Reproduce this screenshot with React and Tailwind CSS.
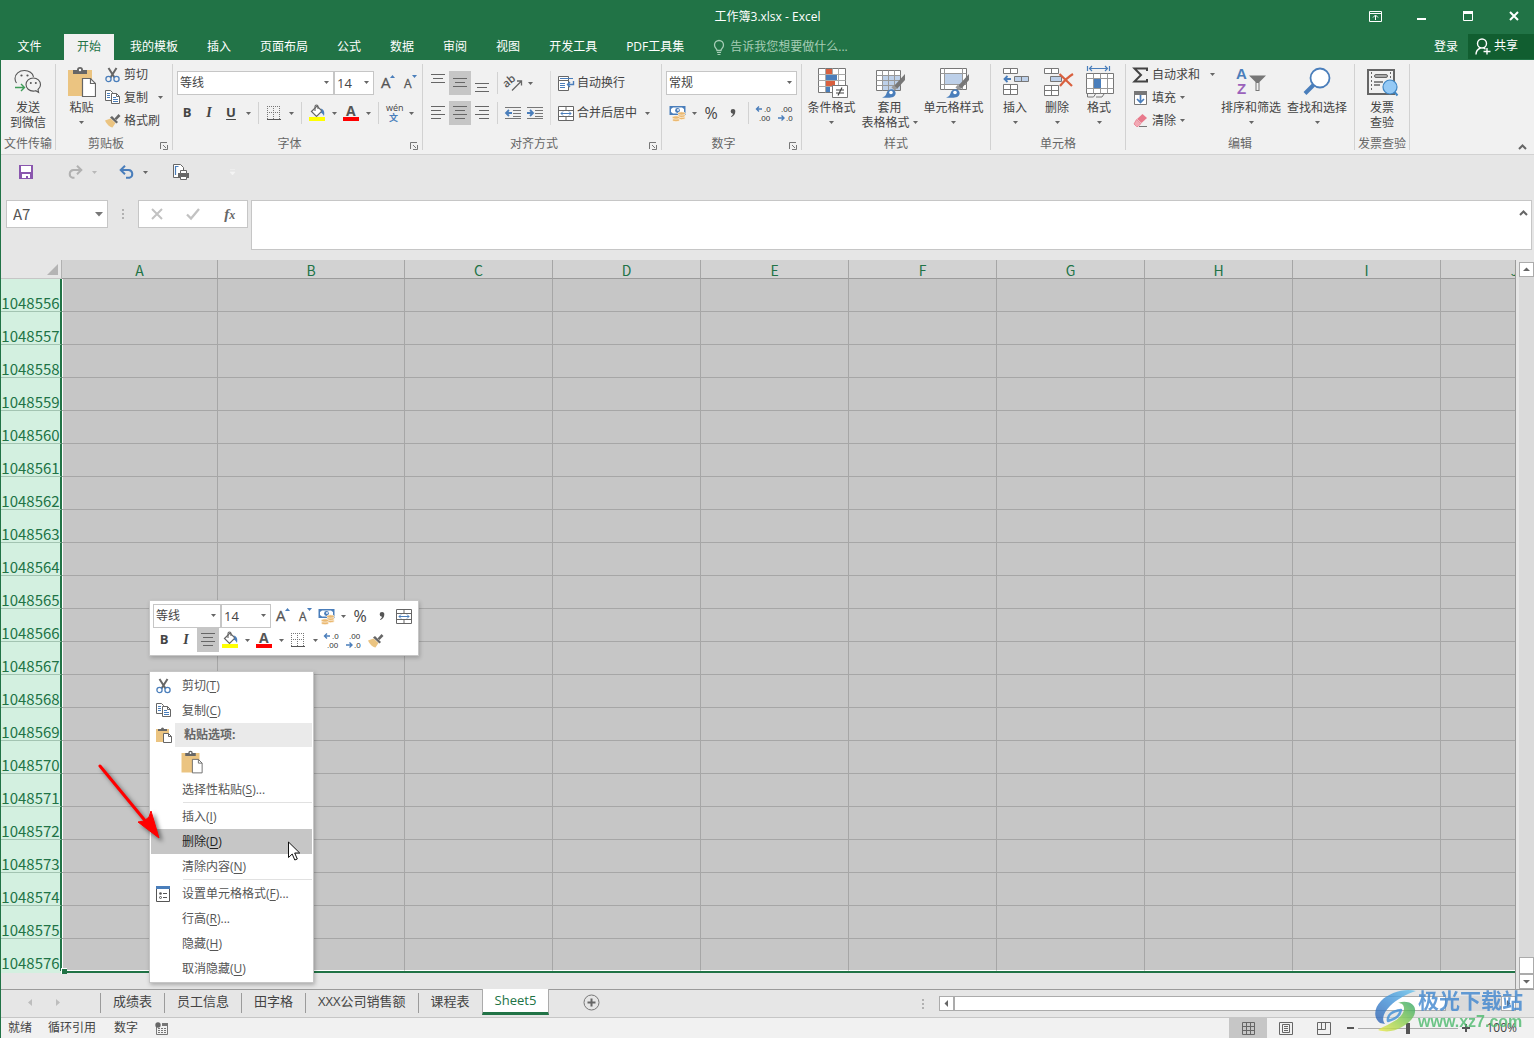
import { useState } from 'react';
import clsx from 'clsx';

const TABS = ['我的模板', '插入', '页面布局', '公式', '数据', '审阅', '视图', '开发工具', 'PDF工具集'];
const COLUMNS = ['A', 'B', 'C', 'D', 'E', 'F', 'G', 'H', 'I', 'J'];
const ROWS = Array.from({ length: 21 }, (_, i) => 1048556 + i);
const SHEETS = ['成绩表', '员工信息', '田字格', 'XXX公司销售额', '课程表'];

/* ---------- icons ---------- */

function Svg({ w = 16, h = 16, className, children, ...rest }) {
  return (
    <svg
      width={w}
      height={h}
      viewBox={`0 0 ${w} ${h}`}
      fill="none"
      className={clsx('shrink-0 overflow-visible', className)}
      aria-hidden="true"
      {...rest}
    >
      {children}
    </svg>
  );
}

function Caret({ className = 'text-[#666]' }) {
  return (
    <Svg w={5} h={3} className={className}>
      <path d="M0 0h5L2.500 3z" fill="currentColor" />
    </Svg>
  );
}

function Chevron() {
  return (
    <Svg w={9} h={6}>
      <path d="M1 5l3.500-3.500L8 5" stroke="#666" strokeWidth="2" />
    </Svg>
  );
}

function WechatIcon() {
  return (
    <Svg w={28} h={32}>
      <g stroke="#555" strokeWidth="1.100">
        <path d="M2.500 17c-1-1.500-1.500-2.500-1.500-4.500C1 8 5 4.500 10.500 4.500c4.500 0 8.300 2.600 9 6.300" />
        <path d="M24 23.500c1.500-1.300 2.500-3 2.500-4.800 0-3.900-3.200-6.700-7.200-6.700S12 14.900 12 18.600s3.300 6.500 7.300 6.500c.9 0 1.700-.1 2.500-.4l2.800 1.700z" />
      </g>
      <g fill="#555">
        <circle cx="7.500" cy="9.500" r="1.100" />
        <circle cx="13.500" cy="9.500" r="1.100" />
        <circle cx="16.800" cy="17" r="1" />
        <circle cx="21.800" cy="17" r="1" />
      </g>
      <path d="M1 21.500h9M7 18l3.500 3.500L7 25" stroke="#3f9c58" strokeWidth="1.400" />
    </Svg>
  );
}

function PasteIcon({ small }) {
  return (
    <svg
      width={small ? 22 : 28}
      height={small ? 24 : 32}
      viewBox="0 0 28 32"
      fill="none"
      className="shrink-0"
      aria-hidden="true"
    >
      <path d="M0 4h24v26H0z" fill="#ebc481" />
      <path d="M5 8V4h4a3 3 0 0 1 6 0h4v4z" fill="#666" />
      <circle cx="12" cy="4" r="1.200" fill="#fff" />
      <path d="M14.500 12.500h8l5 5v13h-13z" fill="#fff" stroke="#666" strokeWidth="1.200" />
      <path d="M22.500 12.500v5h5" stroke="#666" strokeWidth="1.200" />
    </svg>
  );
}

function PasteSmallIcon() {
  return (
    <Svg>
      <path d="M0 2h13v13H0z" fill="#ebc481" />
      <path d="M2 4V2h3a1.500 1.500 0 0 1 3 0h3v2z" fill="#666" />
      <path d="M7.500 6.500h5l3 3v6h-8z" fill="#fff" stroke="#666" />
      <path d="M12.500 6.500v3h3" stroke="#666" />
    </Svg>
  );
}

function CutIcon() {
  return (
    <Svg w={15} h={16}>
      <path d="M3.500 1L9.500 10.500M11.500 1L5.500 10.500" stroke="#666" strokeWidth="2" />
      <circle cx="3.500" cy="12" r="2.600" stroke="#4a7ebb" strokeWidth="1.300" />
      <circle cx="11.500" cy="12" r="2.600" stroke="#4a7ebb" strokeWidth="1.300" />
    </Svg>
  );
}

function CopyIcon() {
  return (
    <Svg w={15} h={15}>
      <path d="M.5.500h5l2 2v8h-7z" fill="#fff" stroke="#666" />
      <path d="M2 3.500h3M2 5.500h3M2 7.500h3" stroke="#4a7ebb" />
      <path d="M6.500 3.500h5l3 3v7h-8z" fill="#fff" stroke="#666" />
      <path d="M11.500 3.500v3h3" stroke="#666" />
      <path d="M8 7.500h3M8 9.500h5M8 11.500h5" stroke="#4a7ebb" />
    </Svg>
  );
}

function BrushIcon() {
  return (
    <Svg w={16} h={15}>
      <path d="M0 7.500l5.500-2 5 4.500-3 4.500c-3-.5-6-3.500-7.500-7z" fill="#ebc481" />
      <path d="M5 4.500l2-1.500 6 6-1.500 1.500z" fill="#666" />
      <path d="M9.500 5.500l4-4.500 2 2-4 4z" fill="#666" />
    </Svg>
  );
}

function GrowFont({ down }) {
  return (
    <Svg w={16} h={18}>
      <text
        x={down ? 3 : 2}
        y="14"
        fontSize={down ? 12 : 15}
        fill="#555"
        stroke="#555"
        strokeWidth=".3"
        fontFamily="'Open Sans', sans-serif"
      >
        A
      </text>
      <path d={down ? 'M11 1h5l-2.500 3z' : 'M11 4h5l-2.500-3z'} fill="#4a7ebb" />
    </Svg>
  );
}

function BorderIcon() {
  return (
    <Svg w={14} h={14} shapeRendering="crispEdges">
      <path
        d="M0 .5h14M0 6.500h14M.5 0v13M6.500 0v13M12.500 0v13"
        stroke="#777"
        strokeDasharray="1 1"
      />
      <path d="M0 13h14" stroke="#555" strokeWidth="1" />
    </Svg>
  );
}

function FillIcon() {
  return (
    <Svg w={16} h={18}>
      <path d="M2.500 7.500L8 2l5 5-5.500 5.500z" fill="#fff" stroke="#666" strokeWidth="1.200" />
      <path d="M6 7V2.500a1.500 1.500 0 0 1 3 0V5" stroke="#666" strokeWidth="1.100" />
      <path d="M11.500 4.500c3 .5 4.500 3 3.500 7.500-1-2-2-3-3.500-3.500L13 7z" fill="#4a7ebb" />
      <path d="M0 13h16v4H0z" fill="#ff0" />
    </Svg>
  );
}

function FontColorIcon() {
  return (
    <Svg w={16} h={18}>
      <text x="3" y="12" fontSize="14" fontWeight="700" fill="#555" fontFamily="'Open Sans', sans-serif">
        A
      </text>
      <path d="M0 13h16v4H0z" fill="#f00" />
    </Svg>
  );
}

function PinyinIcon() {
  return (
    <Svg w={18} h={18}>
      <text x="1" y="7" fontSize="9" fill="#444" fontFamily="'Open Sans', sans-serif">
        wén
      </text>
      <text x="4" y="17" fontSize="9" fontWeight="700" fill="#4a7ebb" fontFamily="'Noto Sans CJK SC', sans-serif">
        文
      </text>
    </Svg>
  );
}

const LINE_SETS = {
  top: 'M0 .5h14M2 4.500h10M0 8.500h14',
  middle: 'M0 4.500h14M2 8.500h10M0 12.500h14',
  bottom: 'M0 9.500h14M2 13.500h10M0 17.500h14',
  left: 'M0 2.500h14M0 6.500h10M0 10.500h14M0 14.500h10',
  center: 'M0 2.500h14M2 6.500h10M0 10.500h14M2 14.500h10',
  right: 'M0 2.500h14M4 6.500h10M0 10.500h14M4 14.500h10',
};

function LinesIcon({ kind }) {
  return (
    <Svg w={14} h={18}>
      <path d={LINE_SETS[kind]} stroke="#666" />
    </Svg>
  );
}

function OrientationIcon() {
  return (
    <Svg w={17} h={17}>
      <text
        x="0"
        y="10"
        fontSize="11"
        fontWeight="600"
        fill="#555"
        fontFamily="'Open Sans', sans-serif"
        transform="rotate(-40 5 10)"
      >
        ab
      </text>
      <path d="M7 15.500l9-9M12 6h4.500v4.500" stroke="#666" strokeWidth="1.300" />
    </Svg>
  );
}

function IndentIcon({ out }) {
  return (
    <Svg w={16} h={14}>
      <path d="M0 1.500h16M8 4.500h8M8 7.500h8M8 10.500h8M0 12.500h16" stroke="#777" />
      <path
        d={out ? 'M7 7H2M4 4L1 7l3 3' : 'M0 7h5M3 4l3 3-3 3'}
        stroke="#4a7ebb"
        strokeWidth="1.800"
      />
    </Svg>
  );
}

function WrapIcon() {
  return (
    <Svg w={17} h={17}>
      <path d="M.5 1.500h10v4H.5zM.5 5.500h10v10H.5z" fill="#fff" stroke="#666" />
      <path d="M2 3.500h13M2 8.500h5M2 10.500h5M2 12.500h5" stroke="#4a7ebb" />
      <path d="M15.500 6v3.500H9.500M12 7L9.500 9.500 12 12" stroke="#4a7ebb" strokeWidth="1.400" />
    </Svg>
  );
}

function MergeIcon() {
  return (
    <Svg w={16} h={15}>
      <path d="M.5.500h15v14H.5zM.5 4.500h15M.5 10.500h15M8 .5v4M8 10.500v4" fill="#fff" stroke="#666" />
      <path d="M3 7.500h10M5 5.500l-2 2 2 2M11 5.500l2 2-2 2" stroke="#4a7ebb" />
    </Svg>
  );
}

function CurrencyIcon() {
  return (
    <Svg w={17} h={17}>
      <path d="M.5 1h16v9H.5z" fill="#4a7ebb" />
      <path d="M2 4l2-1.500h9L15 4v3l-2 1.500H4L2 7z" fill="#fff" />
      <circle cx="8.500" cy="5.500" r="2.400" fill="#4a7ebb" />
      <circle cx="9" cy="5" r=".9" fill="#fff" />
      <g fill="#ebb971" stroke="#fff" strokeWidth=".6">
        <ellipse cx="12.500" cy="13" rx="3.800" ry="1.700" />
        <ellipse cx="12.500" cy="10.800" rx="3.800" ry="1.700" />
        <ellipse cx="12.500" cy="8.500" rx="3.800" ry="1.700" />
        <ellipse cx="7" cy="15" rx="3.800" ry="1.700" />
        <ellipse cx="7" cy="12.500" rx="3.800" ry="1.700" />
      </g>
    </Svg>
  );
}

function DecimalIcon({ less }) {
  return (
    <Svg w={16} h={17}>
      <g fontSize="8" fill="#333" fontFamily="'Liberation Sans', sans-serif">
        <text x={less ? 3 : 8} y="7">{less ? '.00' : '.0'}</text>
        <text x={less ? 8 : 3} y="16">{less ? '.0' : '.00'}</text>
      </g>
      <path
        d={less ? 'M0 13h5.500M3.500 10.500L6 13l-2.500 2.500' : 'M6 4H1M3 1.500L.5 4 3 6.500'}
        stroke="#4a7ebb"
        strokeWidth="1.400"
      />
    </Svg>
  );
}

function ConditionalIcon() {
  return (
    <Svg w={32} h={32}>
      <path d="M2.500 2.500h27v24h-27z" fill="#fff" stroke="#777" />
      <path d="M2.500 8.500h27M2.500 14.500h27M2.500 20.500h27M9.500 2.500v24M16.500 2.500v24M22.500 2.500v24" stroke="#aaa" />
      <path d="M10 3h6v5h-6zM10 15h9v5h-9z" fill="#d9603f" />
      <path d="M10 9h11v5H10zM10 21h4v5h-4z" fill="#4a7ebb" />
      <path d="M16.500 19.500h15v12h-15z" fill="#fff" stroke="#777" />
      <path d="M20 24h8M20 27h8M26 21.500l-4 8" stroke="#444" strokeWidth="1.200" />
    </Svg>
  );
}

function StyleBrush() {
  return (
    <>
      <path d="M31 8v6l-8 9-3-3z" fill="#777" />
      <path d="M19.500 19l3.500 3-2 2.500-3.500-3z" fill="#999" />
      <path d="M8 31.500c4-1 4-3 5-5.500 1.500-3 5.500-3.500 7.500-1.500 2.300 2.500 1 6-2.500 6.800-3 .7-6.500.7-10 .2z" fill="#4a7ebb" />
      <circle cx="17" cy="26.500" r="1.800" fill="#fff" />
    </>
  );
}

function TableStyleIcon() {
  return (
    <Svg w={32} h={32}>
      <path d="M2.500 4.500h24v20h-24z" fill="#fff" stroke="#777" />
      <path d="M9 10h17v14H9z" fill="#bdd0e9" />
      <path d="M2.500 9.500h24M2.500 14.500h24M2.500 19.500h24M8.500 4.500v20M14.500 4.500v20M20.500 4.500v20" stroke="#999" />
      <StyleBrush />
    </Svg>
  );
}

function CellStyleIcon() {
  return (
    <Svg w={32} h={32}>
      <path d="M2.500 2.500h26v21h-26z" fill="#fff" stroke="#777" />
      <path d="M7 7.500h17v11H7z" fill="#bdd0e9" />
      <path d="M2.500 7.500h26M2.500 18.500h26M6.500 2.500v21M24.500 2.500v21" stroke="#999" />
      <StyleBrush />
    </Svg>
  );
}

function InsertCellsIcon() {
  return (
    <Svg w={28} h={32}>
      <path d="M2.500 2.500h14v5h-14zM9.500 2.500v5M2.500 18.500h14v10h-14zM2.500 23.500h14M9.500 18.500v10" fill="#fff" stroke="#777" />
      <path d="M13.500 10.500h14v5h-14zM20.500 10.500v5" fill="#bdd0e9" stroke="#777" />
      <path d="M10 13H4M6.500 10L3.500 13l3 3" stroke="#4a7ebb" strokeWidth="1.800" />
    </Svg>
  );
}

function DeleteCellsIcon() {
  return (
    <Svg w={30} h={32}>
      <path d="M2.500 2.500h14v5h-14zM9.500 2.500v5M2.500 19.500h14v10h-14zM2.500 24.500h14M9.500 19.500v10" fill="#fff" stroke="#777" />
      <path d="M8.500 10.500h11v5h-11z" fill="#bdd0e9" stroke="#777" />
      <path d="M17.500 8L30 20M31 8c-5 3-9 7-13 12" stroke="#d9603f" strokeWidth="2.200" />
    </Svg>
  );
}

function FormatCellsIcon() {
  return (
    <Svg w={30} h={32}>
      <path d="M3.500 0v5M25.500 0v5M5 2.500h19M8 0L5.500 2.500 8 5M21 0l2.500 2.500L21 5" stroke="#4a7ebb" strokeWidth="1.200" />
      <path d="M2.500 7.500h27v20h-27z" fill="#fff" stroke="#777" />
      <path d="M2.500 12.500h27M2.500 22.500h27M9.500 7.500v20M16.500 7.500v20M23.500 7.500v20" stroke="#999" />
      <path d="M10 13h7v9h-7z" fill="#4a7ebb" />
      <path d="M3.500 28v3h6l2-3M12 31h6l2-3" stroke="#777" />
    </Svg>
  );
}

function SumIcon() {
  return (
    <Svg w={15} h={16}>
      <path d="M14 4V1.500H1.500L8 8l-6.500 6.500H14V12" stroke="#444" strokeWidth="2" />
    </Svg>
  );
}

function FillDownIcon() {
  return (
    <Svg w={15} h={16}>
      <path d="M1.500 1.500h12v13h-12z" fill="#fff" stroke="#777" />
      <path d="M1 1h13v4H1z" fill="#777" />
      <path d="M7.500 5v7.500M4 9l3.500 3.500L11 9" stroke="#4a7ebb" strokeWidth="1.700" />
    </Svg>
  );
}

function EraserIcon() {
  return (
    <Svg w={15} h={15}>
      <path d="M4 6l5.500-5L14 5l-5.500 5z" fill="#e8798b" />
      <path d="M3.500 6.500L8 10.500l-3 3H3.500L1 11z" fill="#f2a9b4" stroke="#e8798b" strokeWidth=".8" />
      <path d="M6 13.500h8" stroke="#777" />
    </Svg>
  );
}

function SortIcon() {
  return (
    <Svg w={32} h={32}>
      <g fontSize="15" fontWeight="700" fontFamily="'Liberation Sans', sans-serif">
        <text x="1" y="13" fill="#4a7ebb">A</text>
        <text x="2" y="28" fill="#9b62bb">Z</text>
      </g>
      <path d="M14 9.500h17l-6.500 6.500v9h-4v-9z" fill="#777" />
      <path d="M21.500 17h2v7h-2z" fill="#f1f1f1" />
    </Svg>
  );
}

function FindIcon() {
  return (
    <Svg w={28} h={32}>
      <circle cx="17" cy="12" r="9.500" fill="#fff" stroke="#4a7ebb" strokeWidth="1.800" />
      <path d="M10.500 19L2 27.500" stroke="#4a7ebb" strokeWidth="4" />
    </Svg>
  );
}

function InvoiceIcon() {
  return (
    <Svg w={32} h={32}>
      <path d="M2 4h26v24H2z" stroke="#666" strokeWidth="2" />
      <path d="M5.500 6v20M24.500 6v9" stroke="#666" strokeDasharray="2 2" />
      <rect x="8.500" y="8.500" width="13" height="3" rx="1.500" fill="#aaa" stroke="#666" />
      <path d="M8 16h9M8 19h6" stroke="#666" strokeWidth="1.400" />
      <circle cx="24" cy="21" r="7" fill="#94c9f5" stroke="#3f86c4" strokeWidth="1.200" />
      <path d="M28.500 26l3 3.500" stroke="#3f86c4" strokeWidth="2" />
    </Svg>
  );
}

function LauncherIcon() {
  return (
    <Svg w={8} h={8}>
      <path d="M.5 7V.5H7M3 3l3 3M7.500 3v4.500H3" stroke="#777" />
    </Svg>
  );
}

function FormatDialogIcon() {
  return (
    <Svg w={15} h={16}>
      <path d="M.5.500h13v15H.5z" fill="#fff" stroke="#555" />
      <path d="M0 0h14v3H0z" fill="#4a7ebb" />
      <path d="M7 7.500h4M7 11.500h4" stroke="#555" />
      <circle cx="4.500" cy="7.500" r="1.300" fill="#555" />
      <circle cx="4.500" cy="11.500" r="1" stroke="#555" />
    </Svg>
  );
}

/* ---------- ribbon parts ---------- */

function Divider() {
  return <span className="mx-1 h-[22px] w-px bg-[#d2d2d2]" />;
}

function IconButton({ label, active, children }) {
  return (
    <button
      type="button"
      aria-label={label}
      className={clsx('flex h-6 w-[22px] items-center justify-center', active && 'bg-[#c6c6c6]')}
    >
      {children}
    </button>
  );
}

function CaretButton({ label }) {
  return (
    <button type="button" aria-label={label} className="flex h-6 w-3 items-center justify-center">
      <Caret />
    </button>
  );
}

function Combo({ label, value, className }) {
  return (
    <span className={clsx('relative block h-6', className)}>
      <select
        aria-label={label}
        defaultValue={value}
        className="h-6 w-full appearance-none border border-[#c6c6c6] bg-white pb-px pl-[2px] leading-5 text-[#444] outline-none"
      >
        <option>{value}</option>
      </select>
      <span className="pointer-events-none absolute top-[10px] right-[5px]">
        <Caret />
      </span>
    </span>
  );
}

function Group({ title, launcher, className, children }) {
  return (
    <section className={clsx('flex h-[86px] shrink-0 flex-col border-r border-[#d2d2d2]', className)}>
      <div className="flex h-[72px]">{children}</div>
      <div className="flex h-[14px] items-center">
        <h2 className="flex-1 pt-[2px] text-center leading-[14px] whitespace-nowrap text-[#666]">{title}</h2>
        {launcher && (
          <button type="button" aria-label={`${title}设置`} className="mt-[6px] w-4 pl-1">
            <LauncherIcon />
          </button>
        )}
      </div>
    </section>
  );
}

function BigButton({ icon, lines, caret = 'below', className }) {
  return (
    <button type="button" className={clsx('flex flex-col items-center pt-[2px] leading-[15px]', className)}>
      <span className="flex h-[34px] justify-center">{icon}</span>
      <span className="whitespace-nowrap">{lines[0]}</span>
      <span className="flex h-[15px] items-center gap-[3px] whitespace-nowrap">
        {lines[1]}
        {caret && <Caret />}
      </span>
    </button>
  );
}

function SmallButton({ icon, text, caret, wide }) {
  return (
    <button type="button" className="flex h-[23px] items-center gap-1 pb-[2px] whitespace-nowrap">
      <span className="flex w-[15px] justify-center">{icon}</span>
      {text}
      {caret && (
        <span className={wide ? 'pl-[6px]' : ''}>
          <Caret />
        </span>
      )}
    </button>
  );
}

function Bold() {
  return <span className="text-[13px] font-bold">B</span>;
}

function Italic() {
  return <span className="font-[Liberation_Serif] text-sm font-bold italic">I</span>;
}

function Percent() {
  return <span className="text-base">%</span>;
}

function Comma() {
  return (
    <Svg w={6} h={8}>
      <path d="M3 0a2.300 2.300 0 0 1 2.300 2.500C5.300 5 4 7 1.500 8l-.5-.8c1.200-.7 1.900-1.500 2-2.500A2.300 2.300 0 0 1 3 0z" fill="#555" />
    </Svg>
  );
}

function Ribbon() {
  return (
    <div className="flex h-[95px] shrink-0 items-start border-b border-[#d2d2d2] bg-[#f1f1f1] pt-1 text-xs text-[#444]">
      <Group title="文件传输" className="w-[55px]">
        <BigButton icon={<WechatIcon />} lines={['发送', '到微信']} caret={null} className="w-full" />
      </Group>

      <Group title="剪贴板" launcher className="w-[117px]">
        <BigButton icon={<PasteIcon />} lines={['粘贴']} className="w-[49px] pl-[2px]" />
        <div className="flex flex-col">
          <SmallButton icon={<CutIcon />} text="剪切" />
          <SmallButton icon={<CopyIcon />} text="复制" caret wide />
          <SmallButton icon={<BrushIcon />} text="格式刷" />
        </div>
      </Group>

      <Group title="字体" launcher className="w-[250px]">
        <div className="flex flex-col gap-[6px] pt-[7px] pl-[3px]">
          <div className="flex items-center pl-px">
            <Combo label="字体" value="等线" className="w-[157px]" />
            <Combo label="字号" value="14" className="w-10 text-[13px]" />
            <div className="flex pl-[2px]">
              <IconButton label="增大字号"><GrowFont /></IconButton>
              <IconButton label="减小字号"><GrowFont down /></IconButton>
            </div>
          </div>
          <div className="flex items-center">
            <IconButton label="加粗"><Bold /></IconButton>
            <IconButton label="倾斜"><Italic /></IconButton>
            <IconButton label="下划线">
              <span className="text-[13px] font-bold underline underline-offset-2">U</span>
            </IconButton>
            <CaretButton label="下划线选项" />
            <Divider />
            <IconButton label="边框"><BorderIcon /></IconButton>
            <CaretButton label="边框选项" />
            <Divider />
            <IconButton label="填充颜色"><FillIcon /></IconButton>
            <CaretButton label="填充颜色选项" />
            <IconButton label="字体颜色"><FontColorIcon /></IconButton>
            <CaretButton label="字体颜色选项" />
            <Divider />
            <IconButton label="拼音指南"><PinyinIcon /></IconButton>
            <CaretButton label="拼音选项" />
          </div>
        </div>
      </Group>

      <Group title="对齐方式" launcher className="w-[239px]">
        <div className="flex flex-col gap-[6px] pt-[7px] pl-1">
          <div className="flex items-center">
            <IconButton label="顶端对齐"><LinesIcon kind="top" /></IconButton>
            <IconButton label="垂直居中" active><LinesIcon kind="middle" /></IconButton>
            <IconButton label="底端对齐"><LinesIcon kind="bottom" /></IconButton>
            <Divider />
            <IconButton label="方向"><OrientationIcon /></IconButton>
            <CaretButton label="方向选项" />
          </div>
          <div className="flex items-center">
            <IconButton label="左对齐"><LinesIcon kind="left" /></IconButton>
            <IconButton label="居中" active><LinesIcon kind="center" /></IconButton>
            <IconButton label="右对齐"><LinesIcon kind="right" /></IconButton>
            <Divider />
            <IconButton label="减少缩进量"><IndentIcon out /></IconButton>
            <IconButton label="增加缩进量"><IndentIcon /></IconButton>
          </div>
        </div>
        <div className="mt-[7px] ml-1 flex h-[54px] flex-col gap-[6px] border-l border-[#dcdcdc] pl-[7px]">
          <button type="button" className="flex h-6 items-center gap-[2px]">
            <WrapIcon />
            自动换行
          </button>
          <div className="flex items-center gap-1">
            <button type="button" className="flex h-6 items-center gap-[3px]">
              <MergeIcon />
              合并后居中
            </button>
            <CaretButton label="合并选项" />
          </div>
        </div>
      </Group>

      <Group title="数字" launcher className="w-[140px]">
        <div className="flex flex-col gap-[6px] pt-[7px] pl-1">
          <Combo label="数字格式" value="常规" className="w-[131px]" />
          <div className="flex items-center">
            <IconButton label="会计数字格式"><CurrencyIcon /></IconButton>
            <CaretButton label="货币选项" />
            <IconButton label="百分比样式"><Percent /></IconButton>
            <IconButton label="千位分隔样式"><Comma /></IconButton>
            <Divider />
            <IconButton label="增加小数位数"><DecimalIcon /></IconButton>
            <IconButton label="减少小数位数"><DecimalIcon less /></IconButton>
          </div>
        </div>
      </Group>

      <Group title="样式" className="w-[189px]">
        <BigButton icon={<ConditionalIcon />} lines={['条件格式']} className="w-[59px]" />
        <BigButton icon={<TableStyleIcon />} lines={['套用', '表格格式']} className="w-[57px]" />
        <BigButton icon={<CellStyleIcon />} lines={['单元格样式']} className="w-[71px]" />
      </Group>

      <Group title="单元格" className="w-[135px]">
        <div className="flex pl-[3px]">
          <BigButton icon={<InsertCellsIcon />} lines={['插入']} className="w-[42px]" />
          <BigButton icon={<DeleteCellsIcon />} lines={['删除']} className="w-[42px]" />
          <BigButton icon={<FormatCellsIcon />} lines={['格式']} className="w-[42px]" />
        </div>
      </Group>

      <Group title="编辑" className="w-[229px]">
        <div className="flex w-[92px] flex-col pl-[7px]">
          <SmallButton icon={<SumIcon />} text="自动求和" caret wide />
          <SmallButton icon={<FillDownIcon />} text="填充" caret />
          <SmallButton icon={<EraserIcon />} text="清除" caret />
        </div>
        <BigButton icon={<SortIcon />} lines={['排序和筛选']} className="w-[66px]" />
        <BigButton icon={<FindIcon />} lines={['查找和选择']} className="w-[66px]" />
      </Group>

      <Group title="发票查验" className="w-[55px]">
        <BigButton icon={<InvoiceIcon />} lines={['发票', '查验']} caret={null} className="w-full" />
      </Group>

      <button type="button" aria-label="折叠功能区" className="mr-[7px] mb-1 ml-auto self-end">
        <Chevron />
      </button>
    </div>
  );
}

/* ---------- window chrome ---------- */

function TitleBar() {
  return (
    <header className="h-[60px] shrink-0 bg-[#217346] text-xs text-white">
      <div className="grid h-[34px] grid-cols-[1fr_auto_1fr] items-center">
        <span />
        <h1>工作簿3.xlsx - Excel</h1>
        <div className="flex items-center justify-end gap-8 pr-[13px]">
          <button type="button" aria-label="功能区显示选项">
            <Svg w={14} h={12}>
              <path d="M.5.500h12v10H.5zM.5 2.500h12M6.500 9V4.500M4 6.500L6.500 4 9 6.500" stroke="#fff" />
            </Svg>
          </button>
          <button type="button" aria-label="最小化">
            <Svg w={14} h={12}>
              <path d="M2 7h9v2H2z" fill="#fff" />
            </Svg>
          </button>
          <button type="button" aria-label="最大化">
            <Svg w={14} h={12}>
              <path d="M2.500.500h9v9h-9z" stroke="#fff" />
              <path d="M2 0h10v3H2z" fill="#fff" />
            </Svg>
          </button>
          <button type="button" aria-label="关闭">
            <Svg w={14} h={12}>
              <path d="M3 1l8 8M11 1l-8 8" stroke="#fff" strokeWidth="2" />
            </Svg>
          </button>
        </div>
      </div>
      <nav className="flex h-[26px] items-stretch">
        <button type="button" className="mr-[6px] w-[57px]">文件</button>
        <div className="flex gap-[3px]">
          <button type="button" className="bg-[#f1f1f1] px-[13px] text-[#217346]">开始</button>
          {TABS.map((tab) => (
            <button key={tab} type="button" className="px-[13px] whitespace-nowrap">
              {tab}
            </button>
          ))}
        </div>
        <div className="ml-4 flex items-center gap-[5px] text-[#a5cdb5]">
          <Svg w={12} h={15}>
            <path d="M4 10.500c0-2-2.500-2.500-2.500-5.500a4.500 4.500 0 0 1 9 0c0 3-2.500 3.500-2.500 5.500z" stroke="currentColor" strokeWidth="1.300" />
            <path d="M4 12.500h4M4.500 14.500h3" stroke="currentColor" />
          </Svg>
          <input
            aria-label="告诉我您想要做什么"
            placeholder="告诉我您想要做什么..."
            className="w-40 bg-transparent outline-none placeholder:text-[#a5cdb5]"
          />
        </div>
        <div className="ml-auto flex items-stretch">
          <button type="button" className="px-[10px]">登录</button>
          <button type="button" className="mb-px flex w-[66px] items-center gap-[3px] bg-[#115e30] pb-[2px] pl-[7px]">
            <Svg w={16} h={17}>
              <circle cx="7" cy="6.500" r="4.500" stroke="#fff" strokeWidth="1.400" />
              <path d="M1 17.500c0-3 2-5.500 4.500-6.500M8.500 10.800l2 1.500M12 11v6.500M8.500 14.500h7" stroke="#fff" strokeWidth="1.400" />
            </Svg>
            共享
          </button>
        </div>
      </nav>
    </header>
  );
}

function QuickAccess() {
  return (
    <div className="flex h-[34px] shrink-0 items-center pl-[18px]">
      <button type="button" aria-label="保存">
        <Svg w={14} h={14}>
          <path d="M0 0h14v14H0z" fill="#8a57ae" />
          <path d="M2 1h10v6H2zM3 9h8v4H9v-2H7v2H3z" fill="#fff" />
        </Svg>
      </button>
      <button type="button" aria-label="恢复" className="ml-[34px] flex items-center gap-[9px]">
        <Svg w={16} h={14}>
          <path d="M14 5H6.500a4 4 0 0 0-1 7.800h2M10 .8L14.300 5 10 9.200" stroke="#b1b1b1" strokeWidth="2" />
        </Svg>
        <Caret className="text-[#b8b8b8]" />
      </button>
      <button type="button" aria-label="撤销" className="ml-[22px] flex items-center gap-2">
        <Svg w={16} h={14}>
          <path d="M2 5h7.500a4 4 0 0 1 1 7.800H7M6 .8L1.700 5 6 9.200" stroke="#4a7ebb" strokeWidth="2" />
        </Svg>
        <Caret />
      </button>
      <button type="button" aria-label="打印预览" className="ml-[25px]">
        <Svg w={17} h={17}>
          <path d="M5 13.500H.5v-13h7l3 3V6" fill="#fff" stroke="#666" />
          <path d="M2.500 11V2.500h3" stroke="#4a7ebb" strokeWidth="1.200" />
          <path d="M5 9h11v5H5z" fill="#666" />
          <path d="M7.500 6.500h6v3h-6zM7.500 12.500h6v3h-6z" fill="#fff" stroke="#666" />
        </Svg>
      </button>
      <button type="button" aria-label="自定义快速访问工具栏" className="ml-10">
        <Svg w={5} h={6}>
          <path d="M0 .5h5M0 3h5L2.500 6z" stroke="#f4f4f4" fill="#f4f4f4" strokeWidth=".5" />
        </Svg>
      </button>
    </div>
  );
}

function Dots() {
  return (
    <Svg w={2} h={10}>
      <path d="M0 0h2v2H0zM0 4h2v2H0zM0 8h2v2H0z" fill="#b1b1b1" />
    </Svg>
  );
}

function FormulaBar() {
  return (
    <div className="flex h-[71px] shrink-0 items-start pt-[11px] pr-[2px] pl-[5px]">
      <div className="flex h-7 w-[102px] items-center border border-[#c6c6c6] bg-white pr-1">
        <input
          aria-label="名称框"
          defaultValue="A7"
          className="w-full min-w-0 bg-transparent pl-[6px] font-['Noto_Sans_CJK_SC'] text-[15px] leading-5 text-[#555] outline-none"
        />
        <Svg w={8} h={5}>
          <path d="M0 0h8L4 4.500z" fill="#777" />
        </Svg>
      </div>
      <span className="flex h-7 w-[30px] items-center justify-center">
        <Dots />
      </span>
      <div className="flex h-7 w-[110px] items-center justify-around border border-[#c6c6c6] bg-white">
        <button type="button" aria-label="取消">
          <Svg w={12} h={12}>
            <path d="M1 1l10 10M11 1L1 11" stroke="#c2c2c2" strokeWidth="2" />
          </Svg>
        </button>
        <button type="button" aria-label="输入">
          <Svg w={14} h={12}>
            <path d="M1 6.500L5 10.500 13 1" stroke="#c2c2c2" strokeWidth="2.300" />
          </Svg>
        </button>
        <button
          type="button"
          aria-label="插入函数"
          className="font-[Liberation_Serif] text-[15px] leading-5 font-bold text-[#666] italic"
        >
          f<span className="text-xs">x</span>
        </button>
      </div>
      <div className="ml-[3px] flex h-[50px] flex-1 items-start border border-[#c6c6c6] bg-white">
        <textarea aria-label="编辑栏" className="h-full flex-1 resize-none bg-transparent px-1 text-sm outline-none" />
        <button type="button" aria-label="展开编辑栏" className="mt-[9px] mr-[3px]">
          <Chevron />
        </button>
      </div>
    </div>
  );
}

/* ---------- sheet ---------- */

function Grid() {
  return (
    <div className="min-w-0 flex-1 overflow-hidden border-r border-[#9b9b9b]">
      <table className="w-[1588px] table-fixed border-separate border-spacing-0 font-['Noto_Sans_CJK_SC'] text-[15px] text-[#217346]">
        <colgroup>
          <col className="w-[61px]" />
          <col className="w-[156px]" />
          <col className="w-[187px]" />
          {COLUMNS.slice(2).map((c) => (
            <col key={c} className="w-[148px]" />
          ))}
        </colgroup>
        <thead>
          <tr className="h-[19px] leading-4">
            <td className="border-r border-b border-r-[#b1b1b1] border-b-[#c6c6c6] p-0">
              <Svg w={11} h={11} className="mr-[3px] ml-auto">
                <path d="M11 0v11H0z" fill="#b4b4b4" />
              </Svg>
            </td>
            {COLUMNS.map((c) => (
              <th
                key={c}
                scope="col"
                className="border-r border-b border-r-[#a6a6a6] border-b-[#9b9b9b] bg-[#d2d2d2] p-0 pt-[2px] text-sm leading-4 font-normal"
              >
                {c}
              </th>
            ))}
          </tr>
        </thead>
        <tbody>
          {ROWS.map((n, i) => {
            const last = i === ROWS.length - 1;
            return (
              <tr key={n} className={clsx('leading-4', last ? 'h-8' : 'h-[33px]')}>
                <th
                  scope="row"
                  className={clsx(
                    'border-r-2 border-r-[#217346] bg-[#d3f0e0] p-0 text-center align-bottom font-normal',
                    !last && 'border-b border-b-[#a3c4b2]'
                  )}
                >
                  {n}
                </th>
                {COLUMNS.map((c, j) => (
                  <td
                    key={c}
                    className={clsx(
                      'border-r border-b border-r-[#a6a6a6] bg-[#c6c6c6] p-0',
                      last ? 'border-b-white' : 'border-b-[#a6a6a6]',
                      j === 0 && 'shadow-[inset_1px_0_0_#fff]'
                    )}
                  />
                ))}
              </tr>
            );
          })}
        </tbody>
        {/* bottom edge of the selection */}
        <tfoot>
          <tr className="h-[2px]">
            <td className="bg-[#d3f0e0] p-0" />
            <td colSpan={COLUMNS.length} className="bg-[#217346] p-0" />
          </tr>
        </tfoot>
      </table>
    </div>
  );
}

function ScrollButton({ label, path, className }) {
  return (
    <button
      type="button"
      aria-label={label}
      className={clsx('flex h-[15px] w-[15px] shrink-0 items-center justify-center border border-[#ababab] bg-white', className)}
    >
      <Svg w={7} h={7}>
        <path d={path} fill="#666" />
      </Svg>
    </button>
  );
}

function MiniToolbar() {
  return (
    <div className="absolute top-[340px] left-[148px] w-[270px] border border-[#c6c6c6] bg-white py-[3px] pl-[3px] text-xs text-[#444] shadow-[1px_2px_4px_rgba(0,0,0,0.2)]">
      <div className="flex items-center">
        <Combo label="字体" value="等线" className="w-[68px]" />
        <Combo label="字号" value="14" className="w-[50px] text-[13px]" />
        <IconButton label="增大字号"><GrowFont /></IconButton>
        <IconButton label="减小字号"><GrowFont down /></IconButton>
        <IconButton label="会计数字格式"><CurrencyIcon /></IconButton>
        <CaretButton label="货币选项" />
        <IconButton label="百分比样式"><Percent /></IconButton>
        <IconButton label="千位分隔样式"><Comma /></IconButton>
        <IconButton label="合并后居中"><MergeIcon /></IconButton>
      </div>
      <div className="flex items-center">
        <IconButton label="加粗"><Bold /></IconButton>
        <IconButton label="倾斜"><Italic /></IconButton>
        <IconButton label="居中" active><LinesIcon kind="center" /></IconButton>
        <IconButton label="填充颜色"><FillIcon /></IconButton>
        <CaretButton label="填充颜色选项" />
        <IconButton label="字体颜色"><FontColorIcon /></IconButton>
        <CaretButton label="字体颜色选项" />
        <IconButton label="边框"><BorderIcon /></IconButton>
        <CaretButton label="边框选项" />
        <IconButton label="增加小数位数"><DecimalIcon /></IconButton>
        <IconButton label="减少小数位数"><DecimalIcon less /></IconButton>
        <IconButton label="格式刷"><BrushIcon /></IconButton>
      </div>
    </div>
  );
}

function MenuItem({ icon, text, hotkey, more, active }) {
  return (
    <button
      type="button"
      role="menuitem"
      className={clsx(
        'flex h-[25px] w-full items-center text-left',
        active ? 'bg-[#c6c6c6] text-[#222]' : 'text-[#555]'
      )}
    >
      <span className="flex w-[31px] pl-[5px]">{icon}</span>
      <span>
        {text}(<u className="underline-offset-2">{hotkey}</u>){more && '...'}
      </span>
    </button>
  );
}

function MenuRule() {
  return <div className="mb-px ml-8 h-px bg-[#e1e1e1]" />;
}

function ContextMenu() {
  return (
    <div
      role="menu"
      className="absolute top-[411px] left-[148px] w-[165px] border border-[#c6c6c6] bg-white p-px text-xs shadow-[1px_2px_4px_rgba(0,0,0,0.25)]"
    >
      <MenuItem icon={<CutIcon />} text="剪切" hotkey="T" />
      <MenuItem icon={<CopyIcon />} text="复制" hotkey="C" />
      <div className="flex h-6 items-center pl-[5px]">
        <PasteSmallIcon />
        <span className="ml-[3px] h-6 flex-1 bg-[#eaeaea] pl-[9px] leading-6 font-bold text-[#666]">粘贴选项:</span>
      </div>
      <button type="button" role="menuitem" aria-label="粘贴" className="flex h-[30px] w-full items-center pl-[30px]">
        <PasteIcon small />
      </button>
      <MenuItem text="选择性粘贴" hotkey="S" more />
      <MenuRule />
      <MenuItem text="插入" hotkey="I" />
      <MenuItem text="删除" hotkey="D" active />
      <MenuItem text="清除内容" hotkey="N" />
      <MenuRule />
      <MenuItem icon={<FormatDialogIcon />} text="设置单元格格式" hotkey="F" more />
      <MenuItem text="行高" hotkey="R" more />
      <MenuItem text="隐藏" hotkey="H" />
      <MenuItem text="取消隐藏" hotkey="U" />
    </div>
  );
}

function SheetArea() {
  return (
    <main className="relative flex min-h-0 flex-1">
      <Grid />
      <div className="flex w-[18px] flex-col items-center pt-[2px] pl-[2px]">
        <ScrollButton label="向上滚动" path="M0 5h7L3.500 1.500z" />
        <div className="w-[15px] flex-1 bg-[#dadada]" />
        <div className="h-[17px] w-[15px] border border-[#ababab] bg-white" />
        <ScrollButton label="向下滚动" path="M0 2h7L3.500 5.500z" />
      </div>

      <span className="absolute top-[708px] left-[60px] h-[6px] w-[6px] border-t border-l border-white bg-[#217346]" />
      <MiniToolbar />
      <ContextMenu />

      <Svg w={80} h={90} className="pointer-events-none absolute top-[500px] left-[90px] drop-shadow-[3px_3px_2px_rgba(0,0,0,0.5)]">
        <path d="M9 6l47 57" stroke="#f00" strokeWidth="3" strokeLinecap="round" />
        <path d="M68 78L47 62l6-1 5-4 2-6z" fill="#f00" stroke="#f00" />
      </Svg>
      <Svg w={14} h={21} className="pointer-events-none absolute top-[581px] left-[287px]">
        <path d="M.5 1v15.500l3.700-3.500 2.600 6 2.500-1-2.600-6h5z" fill="#fff" stroke="#111" />
      </Svg>
    </main>
  );
}

function SheetTabs() {
  return (
    <div className="flex h-7 shrink-0 items-start border-t border-[#9b9b9b] text-[13px] text-[#444]">
      <div className="flex h-6 w-[99px] items-center gap-6 pl-[27px]">
        <button type="button" aria-label="上一个工作表">
          <Svg w={4} h={7}><path d="M4 0v7L0 3.500z" fill="#bdbdbd" /></Svg>
        </button>
        <button type="button" aria-label="下一个工作表">
          <Svg w={4} h={7}><path d="M0 0v7l4-3.500z" fill="#bdbdbd" /></Svg>
        </button>
      </div>
      {SHEETS.map((name) => (
        <button
          key={name}
          type="button"
          className="mt-[3px] h-5 border-l border-[#9b9b9b] px-3 pb-1 leading-4 whitespace-nowrap"
        >
          {name}
        </button>
      ))}
      <button
        type="button"
        className="-mt-px h-[26px] border-x border-b-3 border-x-[#ababab] border-b-[#217346] bg-white px-3 text-[#217346]"
      >
        Sheet5
      </button>
      <button type="button" aria-label="新工作表" className="mt-1 ml-[34px]">
        <Svg w={17} h={17}>
          <circle cx="8.500" cy="8.500" r="7.500" stroke="#777" />
          <path d="M8.500 4.500v8M4.500 8.500h8" stroke="#666" strokeWidth="2" />
        </Svg>
      </button>
      <div className="mt-[6px] mr-[18px] ml-auto flex items-center">
        <Dots />
        <div className="ml-[15px] flex w-[577px] bg-[#dadada]">
          <ScrollButton label="向左滚动" path="M5 0v7L1.500 3.500z" />
          <div className="h-[15px] w-[492px] border border-[#ababab] bg-white" />
          <ScrollButton label="向右滚动" path="M2 0v7l3.500-3.500z" className="ml-auto" />
        </div>
      </div>
    </div>
  );
}

function StatusBar() {
  const [zoom, setZoom] = useState(100);

  return (
    <footer className="flex h-[21px] shrink-0 items-center border-t border-[#c6c6c6] bg-[#f1f1f1] pl-[7px] text-xs leading-4 text-[#444]">
      <span>就绪</span>
      <span className="ml-4">循环引用</span>
      <span className="ml-[18px]">数字</span>
      <button type="button" aria-label="录制宏" className="ml-[17px]">
        <Svg w={13} h={13}>
          <path d="M1.500 5v7.500h11V1.500H7" stroke="#777" />
          <circle cx="3" cy="3" r="2.700" fill="#666" />
          <path d="M7 1h6v3H7zM3 6h2v1H3zM6 6h2v1H6zM9 6h2v1H9zM3 8h2v1H3zM6 8h2v1H6zM9 8h2v1H9zM3 10h2v1H3zM6 10h2v1H6zM9 10h2v1H9z" fill="#777" />
        </Svg>
      </button>

      <div className="ml-auto flex h-full items-center">
        <button type="button" aria-label="普通" className="flex h-full w-[38px] items-center justify-center bg-[#c6c6c6]">
          <Svg w={13} h={13}>
            <path d="M.5.500h12v12H.5zM.5 4.500h12M.5 8.500h12M4.500.500v12M8.500.500v12" stroke="#666" />
          </Svg>
        </button>
        <button type="button" aria-label="页面布局" className="flex h-full w-[38px] items-center justify-center">
          <Svg w={14} h={13}>
            <path d="M.5.500h13v12H.5zM3.500 2.500h7v8h-7zM5 4.500h4M5 6.500h4M5 8.500h4" stroke="#666" />
          </Svg>
        </button>
        <button type="button" aria-label="分页预览" className="flex h-full w-[38px] items-center justify-center">
          <Svg w={14} h={13}>
            <path d="M.5.500h13v12H.5zM.5 7.500h8v-7M4.500.500v7" stroke="#666" />
          </Svg>
        </button>
        <button type="button" aria-label="缩小" className="ml-1">
          <Svg w={7} h={8}><path d="M0 3h7v2H0z" fill="#555" /></Svg>
        </button>
        <input
          type="range"
          aria-label="缩放"
          min="10"
          max="190"
          value={zoom}
          onChange={(e) => setZoom(Number(e.target.value))}
          className="mx-1 h-3 w-[100px] appearance-none bg-[linear-gradient(#ababab,#ababab)] bg-[length:100%_1px] bg-center bg-no-repeat [&::-webkit-slider-thumb]:h-[11px] [&::-webkit-slider-thumb]:w-1 [&::-webkit-slider-thumb]:appearance-none [&::-webkit-slider-thumb]:bg-[#555]"
        />
        <button type="button" aria-label="放大">
          <Svg w={8} h={8}><path d="M0 3h8v2H0zM3 0h2v8H3z" fill="#555" /></Svg>
        </button>
        <output className="mr-[17px] ml-4 w-[31px] text-right">{zoom}%</output>
      </div>
    </footer>
  );
}

function Watermark() {
  return (
    <div className="pointer-events-none absolute right-[11px] bottom-[5px] flex items-center opacity-80">
      <Svg w={44} h={44}>
        <defs>
          <linearGradient id="swooshBlue" x1="0" y1="1" x2="1" y2="0">
            <stop offset="0" stopColor="#2f5fb0" />
            <stop offset=".5" stopColor="#3f8fd6" />
            <stop offset="1" stopColor="#6cc8f0" />
          </linearGradient>
          <linearGradient id="swooshGreen" x1="0" y1="1" x2="1" y2="0">
            <stop offset="0" stopColor="#f0ea4a" />
            <stop offset=".5" stopColor="#8ccf52" />
            <stop offset="1" stopColor="#2fa56a" />
          </linearGradient>
        </defs>
        <path d="M42 2C30-1 15 4 7 12 0 19-1 29 6 34l5 1c-4-5-1-12 5-18C22 11 32 5 42 2z" fill="url(#swooshBlue)" />
        <path d="M14 32c-1-6 4-10 13-11-1 5-5 9-13 11z" stroke="#3f8fd6" strokeWidth="2.500" strokeLinejoin="round" />
        <path d="M4 41c4-3 8-4 13-7 8-4 13-9 13-14 0-4-2-6-6-6 8-3 16 0 17 6 1 8-6 14-13 18-7 4-15 6-24 3z" fill="url(#swooshGreen)" />
      </Svg>
      <div className="whitespace-nowrap">
        <p className="text-[21px] leading-[22px] font-bold text-[#3f86cf]">极光下载站</p>
        <p className="font-[Liberation_Sans] text-base leading-[22px] font-bold text-[#4dba6d]">www.xz7.com</p>
      </div>
    </div>
  );
}

export default function App() {
  return (
    <div className="relative flex h-screen w-full flex-col overflow-hidden border-l border-[#217346] bg-[#e6e6e6] font-['Open_Sans','Noto_Sans_CJK_SC',sans-serif]">
      <TitleBar />
      <Ribbon />
      <QuickAccess />
      <FormulaBar />
      <SheetArea />
      <SheetTabs />
      <StatusBar />
      <Watermark />
    </div>
  );
}
